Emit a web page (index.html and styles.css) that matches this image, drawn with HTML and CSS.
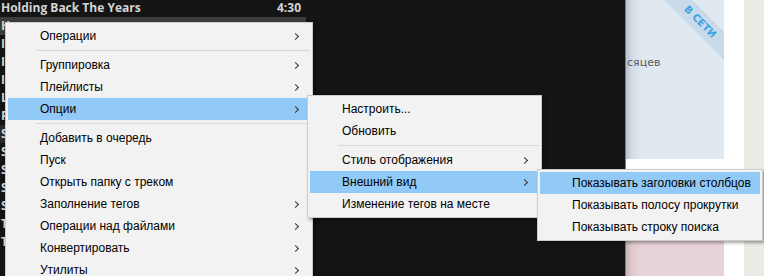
FILE: index.html
```html
<!DOCTYPE html>
<html lang="ru">
<head>
  <meta charset="UTF-8" />
  <title>Меню</title>
  <link rel="stylesheet" href="styles.css">
</head>
<body>
  <div class="screen">
    <div class="tracks">
      <div class="track head"><span>Holding Back The Years</span><span class="time">4:30</span></div>
      <div class="track sel">H</div>
      <div class="track">I</div>
      <div class="track">I</div>
      <div class="track">I</div>
      <div class="track">L</div>
      <div class="track">P</div>
      <div class="track alt">S</div>
      <div class="track">S</div>
      <div class="track">S</div>
      <div class="track">S</div>
      <div class="track">S</div>
      <div class="track">T</div>
      <div class="track">T</div>
    </div>
    <div class="edge"></div>
    <div class="cards">
      <div class="card blue">
        <div class="ribbon">в сети</div>
        <div class="note">сяцев</div>
      </div>
      <div class="card pink"></div>
    </div>
    <div class="strip white"></div>
    <div class="strip beige"></div>
  </div>

  <div class="menu main">
    <div class="item"><span>Операции</span><i class="arr"></i></div>
    <div class="sep"></div>
    <div class="item"><span>Группировка</span><i class="arr"></i></div>
    <div class="item"><span>Плейлисты</span><i class="arr"></i></div>
    <div class="item on"><span>Опции</span><i class="arr"></i></div>
    <div class="sep"></div>
    <div class="item"><span>Добавить в очередь</span></div>
    <div class="item"><span>Пуск</span></div>
    <div class="item"><span>Открыть папку с треком</span></div>
    <div class="item"><span>Заполнение тегов</span><i class="arr"></i></div>
    <div class="item"><span>Операции над файлами</span><i class="arr"></i></div>
    <div class="item"><span>Конвертировать</span><i class="arr"></i></div>
    <div class="item"><span>Утилиты</span><i class="arr"></i></div>
  </div>

  <div class="menu sub1">
    <div class="item"><span>Настроить...</span></div>
    <div class="item"><span>Обновить</span></div>
    <div class="sep"></div>
    <div class="item"><span>Стиль отображения</span><i class="arr"></i></div>
    <div class="item on"><span>Внешний вид</span><i class="arr"></i></div>
    <div class="item"><span>Изменение тегов на месте</span></div>
  </div>

  <div class="menu sub2">
    <div class="item on"><span>Показывать заголовки столбцов</span></div>
    <div class="item"><span>Показывать полосу прокрутки</span></div>
    <div class="item"><span>Показывать строку поиска</span></div>
  </div>
</body>
</html>
```

FILE: styles.css
```css
html, body { margin: 0; padding: 0; }
body { width: 764px; height: 276px; overflow: hidden; position: relative; font-family: "Liberation Sans", Arial, sans-serif; font-size: 12px; background: #141414; }

.screen { display: flex; height: 276px; overflow: hidden; }
.tracks { width: 625px; background: #141414; overflow: hidden; }
.track { height: 18px; line-height: 18px; width: 305px; padding-left: 1px; color: #d4d4d4; font-weight: bold; font-family: "Open Sans", "Liberation Sans", sans-serif; font-size: 12px; }
.track.head { height: 17px; line-height: 15px; display: flex; justify-content: space-between; box-sizing: border-box; padding-right: 4px; }
.track.sel { background: #3c3c3c; }
.track.alt { background: #2a2a2a; }
.edge { width: 1px; background: #3b8fd9; }

.cards { width: 98px; display: flex; flex-direction: column; gap: 10px; background: #fff; }
.card { position: relative; overflow: hidden; }
.card.blue { height: 159px; flex: none; background: linear-gradient(to right, #b7c2cc 0, #d3dde6 6px, #e1e9f0 16px); }
.card.pink { flex: 1; background: linear-gradient(to right, #c9b4b8 0, #dfc9cd 6px, #e8d4d8 16px); }
.ribbon { position: absolute; top: 12px; right: -24px; width: 96px; height: 20px; line-height: 20px; text-align: center; background: #c9dbeb; color: #38a2e4; font-weight: bold; font-size: 10px; text-transform: uppercase; font-family: "DejaVu Sans", sans-serif; transform: rotate(45deg); }
.note { position: absolute; top: 56px; left: 1px; color: #5a5a5a; font-size: 11px; font-family: "DejaVu Sans", sans-serif; }

.strip { width: 20px; }
.strip.white { background: #fff; }
.strip.beige { background: #ecebe5; }

.menu { position: absolute; background: #f2f2f2; border: 1px solid #cccccc; padding: 2px; box-shadow: 2px 2px 3px rgba(0, 0, 0, 0.35); color: #000; white-space: nowrap; overflow: hidden; }
.menu.main { left: 5px; top: 22px; width: 302px; height: 251px; }
.menu.sub1 { left: 307px; top: 95px; width: 229px; }
.menu.sub2 { left: 537px; top: 169px; width: 220px; }

.item { height: 22px; display: flex; align-items: center; justify-content: space-between; padding: 0 10px 0 32px; }
.item.on { background: #91c9f7; }
.arr { display: block; border: solid #333; border-width: 1px 1px 0 0; width: 4px; height: 4px; transform: rotate(45deg); margin-right: 2px; }
.sep { height: 1px; background: #d7d7d7; margin: 3px 0 3px 28px; }
```
